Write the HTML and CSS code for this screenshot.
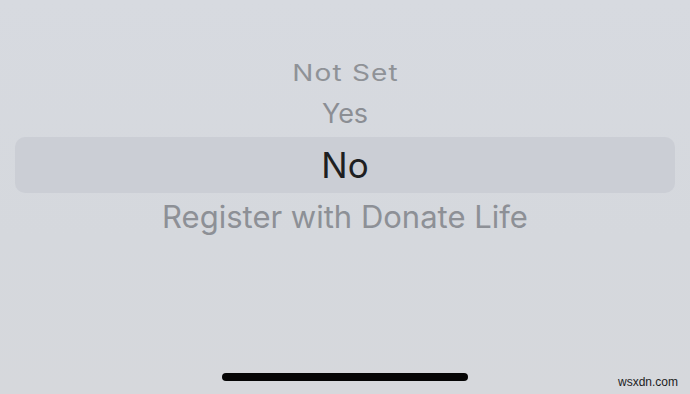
FILE: index.html
```html
<!DOCTYPE html>
<html>
<head>
<meta charset="utf-8">
<link rel="stylesheet" href="styles.css">
</head>
<body>
<div class="screen">
  <div class="picker">
    <div class="row row-notset"><span class="item far">Not Set</span></div>
    <div class="row row-yes"><span class="item near">Yes</span></div>
    <div class="row row-selected"><span class="item selected">No</span></div>
    <div class="row row-register"><span class="item near reg">Register with Donate Life</span></div>
  </div>
  <div class="spacer"></div>
  <div class="home-bar"></div>
  <div class="watermark">wsxdn.com</div>
</div>
</body>
</html>
```
FILE: styles.css
```css
html, body {
  margin: 0;
  padding: 0;
}
body {
  width: 690px;
  height: 394px;
  overflow: hidden;
  background: #d6d9de;
  font-family: Inter, "Noto Sans", sans-serif;
}
.screen {
  position: relative;
  width: 690px;
  height: 394px;
  display: flex;
  flex-direction: column;
  background: linear-gradient(180deg, #d7dae0 0%, #d5d8dd 60%, #d6d8dc 100%);
}
.picker {
  display: flex;
  flex-direction: column;
  padding-top: 54px;
}
.row {
  display: flex;
  align-items: center;
  justify-content: center;
}
.row-notset { height: 38px; }
.row-yes { height: 42px; margin-bottom: 3px; }
.row-selected {
  height: 56px;
  margin: 0 15px;
  border-radius: 10px;
  background: #cbced5;
}
.row-register { height: 46px; }
.item {
  line-height: 1;
  white-space: nowrap;
}
.far {
  display: inline-block;
  font-size: 28px;
  color: #8f9297;
  letter-spacing: 1.2px;
  margin-right: -1.2px;
  transform: scaleY(0.8);
}
.near {
  font-size: 27px;
  color: #8b8e94;
}
.reg {
  font-size: 31px;
  color: #8d9096;
}
.selected {
  font-size: 35px;
  color: #1e1f22;
}
.spacer { flex: 1; }
.home-bar {
  align-self: center;
  width: 246px;
  height: 8px;
  border-radius: 4px;
  background: #050505;
  margin-bottom: 13px;
}
.watermark {
  position: absolute;
  right: 12px;
  bottom: 5px;
  font-family: "Liberation Sans", Arial, sans-serif;
  font-size: 12px;
  color: #1c1c1c;
}
```
